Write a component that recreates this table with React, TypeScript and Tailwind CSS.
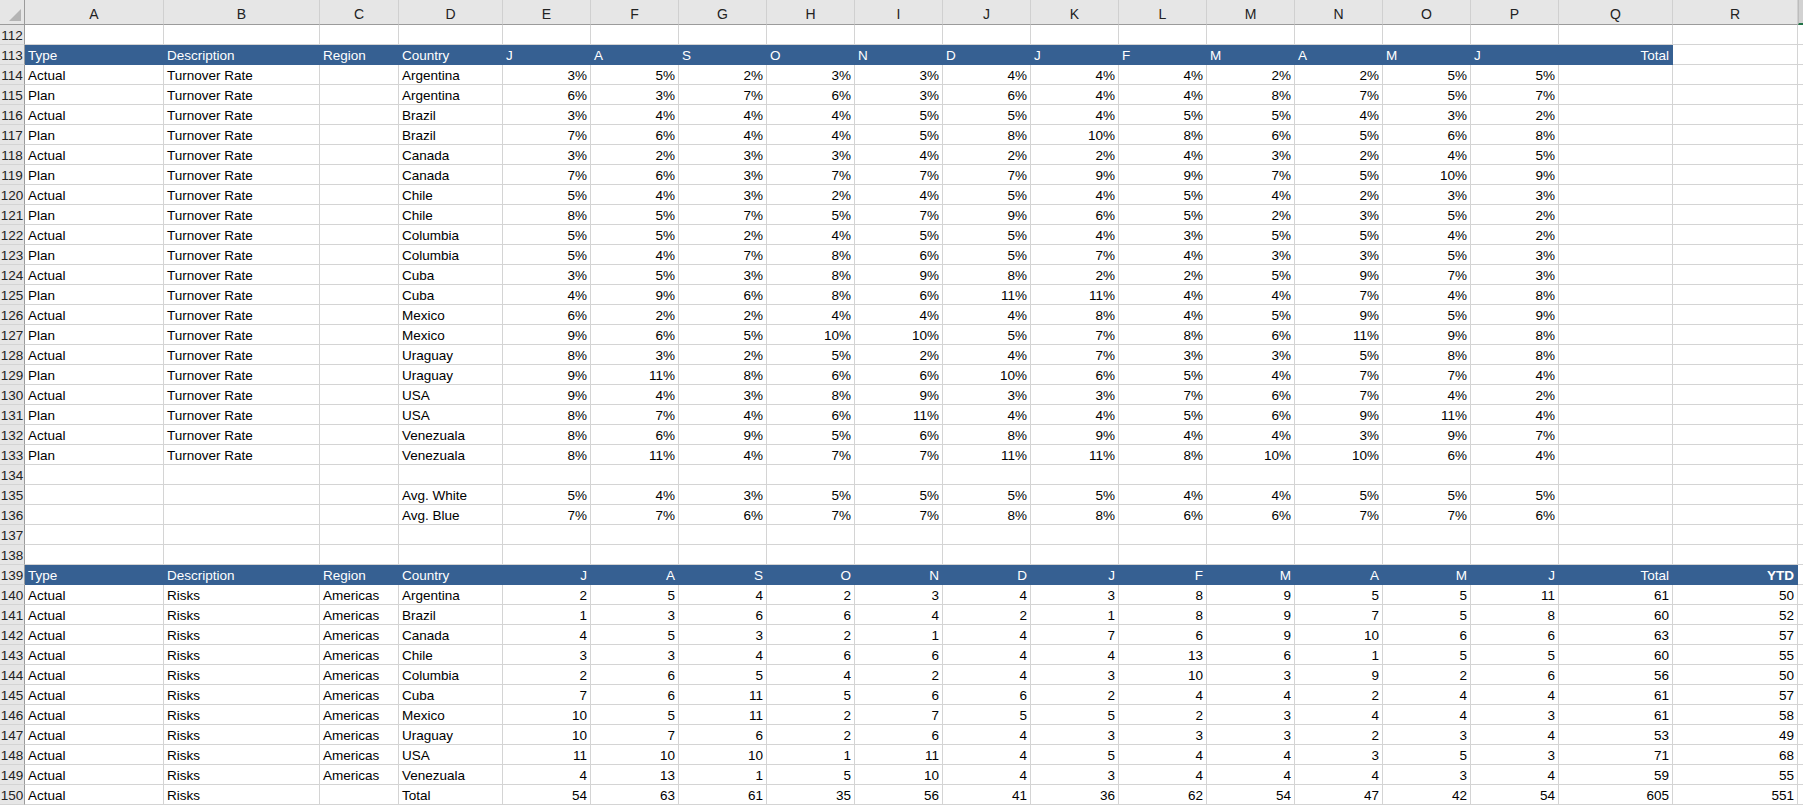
const months = ["J", "A", "S", "O", "N", "D", "J", "F", "M", "A", "M", "J"];
const letters = ["A", "B", "C", "D", "E", "F", "G", "H", "I", "J", "K", "L", "M", "N", "O", "P", "Q", "R"];

const turnover: [string, string, number[]][] = [
  ["Actual", "Argentina", [3, 5, 2, 3, 3, 4, 4, 4, 2, 2, 5, 5]],
  ["Plan", "Argentina", [6, 3, 7, 6, 3, 6, 4, 4, 8, 7, 5, 7]],
  ["Actual", "Brazil", [3, 4, 4, 4, 5, 5, 4, 5, 5, 4, 3, 2]],
  ["Plan", "Brazil", [7, 6, 4, 4, 5, 8, 10, 8, 6, 5, 6, 8]],
  ["Actual", "Canada", [3, 2, 3, 3, 4, 2, 2, 4, 3, 2, 4, 5]],
  ["Plan", "Canada", [7, 6, 3, 7, 7, 7, 9, 9, 7, 5, 10, 9]],
  ["Actual", "Chile", [5, 4, 3, 2, 4, 5, 4, 5, 4, 2, 3, 3]],
  ["Plan", "Chile", [8, 5, 7, 5, 7, 9, 6, 5, 2, 3, 5, 2]],
  ["Actual", "Columbia", [5, 5, 2, 4, 5, 5, 4, 3, 5, 5, 4, 2]],
  ["Plan", "Columbia", [5, 4, 7, 8, 6, 5, 7, 4, 3, 3, 5, 3]],
  ["Actual", "Cuba", [3, 5, 3, 8, 9, 8, 2, 2, 5, 9, 7, 3]],
  ["Plan", "Cuba", [4, 9, 6, 8, 6, 11, 11, 4, 4, 7, 4, 8]],
  ["Actual", "Mexico", [6, 2, 2, 4, 4, 4, 8, 4, 5, 9, 5, 9]],
  ["Plan", "Mexico", [9, 6, 5, 10, 10, 5, 7, 8, 6, 11, 9, 8]],
  ["Actual", "Uraguay", [8, 3, 2, 5, 2, 4, 7, 3, 3, 5, 8, 8]],
  ["Plan", "Uraguay", [9, 11, 8, 6, 6, 10, 6, 5, 4, 7, 7, 4]],
  ["Actual", "USA", [9, 4, 3, 8, 9, 3, 3, 7, 6, 7, 4, 2]],
  ["Plan", "USA", [8, 7, 4, 6, 11, 4, 4, 5, 6, 9, 11, 4]],
  ["Actual", "Venezuala", [8, 6, 9, 5, 6, 8, 9, 4, 4, 3, 9, 7]],
  ["Plan", "Venezuala", [8, 11, 4, 7, 7, 11, 11, 8, 10, 10, 6, 4]],
];

const averages: [string, number[]][] = [
  ["Avg. White", [5, 4, 3, 5, 5, 5, 5, 4, 4, 5, 5, 5]],
  ["Avg. Blue", [7, 7, 6, 7, 7, 8, 8, 6, 6, 7, 7, 6]],
];

const risks: [string, string, number[], number, number][] = [
  ["Americas", "Argentina", [2, 5, 4, 2, 3, 4, 3, 8, 9, 5, 5, 11], 61, 50],
  ["Americas", "Brazil", [1, 3, 6, 6, 4, 2, 1, 8, 9, 7, 5, 8], 60, 52],
  ["Americas", "Canada", [4, 5, 3, 2, 1, 4, 7, 6, 9, 10, 6, 6], 63, 57],
  ["Americas", "Chile", [3, 3, 4, 6, 6, 4, 4, 13, 6, 1, 5, 5], 60, 55],
  ["Americas", "Columbia", [2, 6, 5, 4, 2, 4, 3, 10, 3, 9, 2, 6], 56, 50],
  ["Americas", "Cuba", [7, 6, 11, 5, 6, 6, 2, 4, 4, 2, 4, 4], 61, 57],
  ["Americas", "Mexico", [10, 5, 11, 2, 7, 5, 5, 2, 3, 4, 4, 3], 61, 58],
  ["Americas", "Uraguay", [10, 7, 6, 2, 6, 4, 3, 3, 3, 2, 3, 4], 53, 49],
  ["Americas", "USA", [11, 10, 10, 1, 11, 4, 5, 4, 4, 3, 5, 3], 71, 68],
  ["Americas", "Venezuala", [4, 13, 1, 5, 10, 4, 3, 4, 4, 4, 3, 4], 59, 55],
  ["", "Total", [54, 63, 61, 35, 56, 41, 36, 62, 54, 47, 42, 54], 605, 551],
];

type CellProps = { children?: React.ReactNode; right?: boolean; blue?: boolean; bold?: boolean };

// excel sits text on the bottom of the cell, hence the taller line-height
function Cell({ children, right, blue, bold }: CellProps) {
  return (
    <div
      className={
        "h-5 overflow-hidden whitespace-nowrap border-b border-r px-[3px] leading-[22px] " +
        (right ? "text-right " : "text-left ") +
        (blue ? "border-[#366092] bg-[#366092] text-white " : "border-[#d4d4d4] bg-white text-black ") +
        (bold ? "font-bold" : "")
      }
    >
      {children}
    </div>
  );
}

function RowNum({ n }: { n: number }) {
  return (
    <div className="h-5 overflow-hidden border-b border-r border-b-[#d4d4d4] border-r-[#9b9b9b] bg-[#e6e6e6] text-center leading-[22px] text-[#222]">
      {n}
    </div>
  );
}

function Edge() {
  return <div className="h-5 border-b border-[#d4d4d4] bg-white" />;
}

function EmptyRow({ n }: { n: number }) {
  return (
    <>
      <RowNum n={n} />
      {letters.map((l) => (
        <Cell key={l} />
      ))}
      <Edge />
    </>
  );
}

export default function App() {
  return (
    <div className="h-[807px] w-[1803px] overflow-hidden bg-white font-['Liberation_Sans',Arial,sans-serif] text-[13.5px]">
      <div className="grid grid-cols-[25px_139px_156px_79px_104px_repeat(12,88px)_114px_125px_1fr]">
        {/* column letters */}
        <div className="relative h-[25px] border-b border-r border-[#9b9b9b] bg-[#e6e6e6]">
          <svg className="absolute bottom-[3px] right-[3px]" width="12" height="12" viewBox="0 0 12 12">
            <polygon points="12,0 12,12 0,12" fill="#b4b4b4" />
          </svg>
        </div>
        {letters.map((l) => (
          <div
            key={l}
            className="h-[25px] border-b border-r border-b-[#9b9b9b] border-r-[#d0d0d0] bg-[#e6e6e6] pt-[4px] text-center text-[14px] leading-5 text-[#222]"
          >
            {l}
          </div>
        ))}
        <div className="h-[25px] border-b-2 border-l border-b-[#217346] border-l-[#bdbdbd] bg-[#d2d2d2]" />

        <EmptyRow n={112} />

        {/* turnover header */}
        <RowNum n={113} />
        <Cell blue>Type</Cell>
        <Cell blue>Description</Cell>
        <Cell blue>Region</Cell>
        <Cell blue>Country</Cell>
        {months.map((m, i) => (
          <Cell key={i} blue>
            {m}
          </Cell>
        ))}
        <Cell blue right>
          Total
        </Cell>
        <Cell />
        <Edge />

        {turnover.map(([type, country, vals], r) => (
          <>
            <RowNum n={114 + r} />
            <Cell>{type}</Cell>
            <Cell>Turnover Rate</Cell>
            <Cell />
            <Cell>{country}</Cell>
            {vals.map((v, i) => (
              <Cell key={i} right>
                {v}%
              </Cell>
            ))}
            <Cell />
            <Cell />
            <Edge />
          </>
        ))}

        <EmptyRow n={134} />

        {averages.map(([label, vals], r) => (
          <>
            <RowNum n={135 + r} />
            <Cell />
            <Cell />
            <Cell />
            <Cell>{label}</Cell>
            {vals.map((v, i) => (
              <Cell key={i} right>
                {v}%
              </Cell>
            ))}
            <Cell />
            <Cell />
            <Edge />
          </>
        ))}

        <EmptyRow n={137} />
        <EmptyRow n={138} />

        {/* risks header */}
        <RowNum n={139} />
        <Cell blue>Type</Cell>
        <Cell blue>Description</Cell>
        <Cell blue>Region</Cell>
        <Cell blue>Country</Cell>
        {months.map((m, i) => (
          <Cell key={i} blue right>
            {m}
          </Cell>
        ))}
        <Cell blue right>
          Total
        </Cell>
        <Cell blue right bold>
          YTD
        </Cell>
        <Edge />

        {risks.map(([region, country, vals, total, ytd], r) => (
          <>
            <RowNum n={140 + r} />
            <Cell>Actual</Cell>
            <Cell>Risks</Cell>
            <Cell>{region}</Cell>
            <Cell>{country}</Cell>
            {vals.map((v, i) => (
              <Cell key={i} right>
                {v}
              </Cell>
            ))}
            <Cell right>{total}</Cell>
            <Cell right>{ytd}</Cell>
            <Edge />
          </>
        ))}
      </div>
    </div>
  );
}
